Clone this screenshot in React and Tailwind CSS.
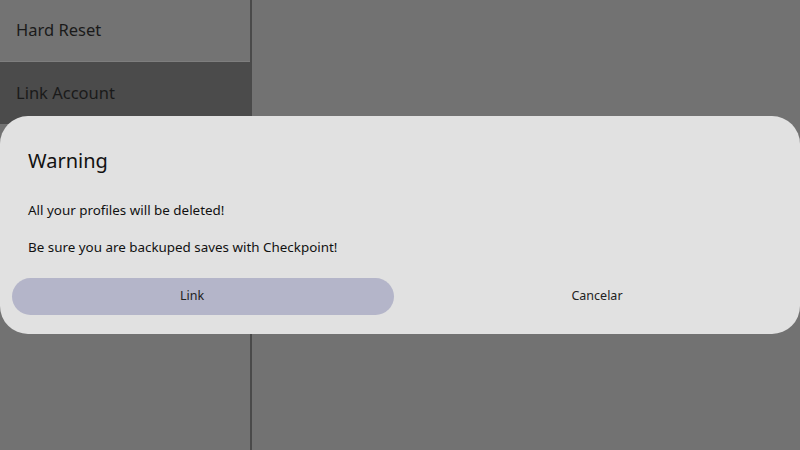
import React from "react";

const menu = [
	{ label: "Hard Reset", active: false },
	{ label: "Link Account", active: true },
];

export default function App() {
	return (
		<div
			className="relative w-[800px] h-[450px] overflow-hidden bg-[#727272] flex"
			style={{ fontFamily: '"Noto Sans", "Open Sans", sans-serif' }}
		>
			<aside className="w-[252px] h-full border-r-2 border-[#4a4a4a] flex flex-col">
				{menu.map((item, i) => (
					<div
						key={i}
						className={`h-[62px] flex items-center pl-4 text-[16.5px] text-[#1a1a1a] ${
							item.active ? "bg-[#4b4b4b]" : "bg-[#737373] border-b border-[#7e7e7e]"
						}`}
					>
						{item.label}
					</div>
				))}
			</aside>
			<main className="flex-1" />

			{/* modal */}
			<div className="absolute left-0 right-0 top-[116px] h-[218px] bg-[#e1e1e1] rounded-[28px] flex flex-col">
				<h2 className="pl-7 pt-[31px] text-[20px] leading-[28px] text-[#111]">Warning</h2>
				<p className="pl-7 mt-[25px] text-[13.4px] leading-[20px] text-[#111]">
					All your profiles will be deleted!
				</p>
				<p className="pl-7 mt-[17px] text-[13.4px] leading-[20px] text-[#111]">
					Be sure you are backuped saves with Checkpoint!
				</p>
				<div className="flex pl-3 mt-[21px]">
					<button className="w-[382px] h-[37px] rounded-full bg-[#b4b5c9] text-[12.5px] text-[#222] pr-[22px]">
						Link
					</button>
					<button className="flex-1 h-[37px] text-[12.5px] text-[#222]">Cancelar</button>
				</div>
			</div>
		</div>
	);
}
